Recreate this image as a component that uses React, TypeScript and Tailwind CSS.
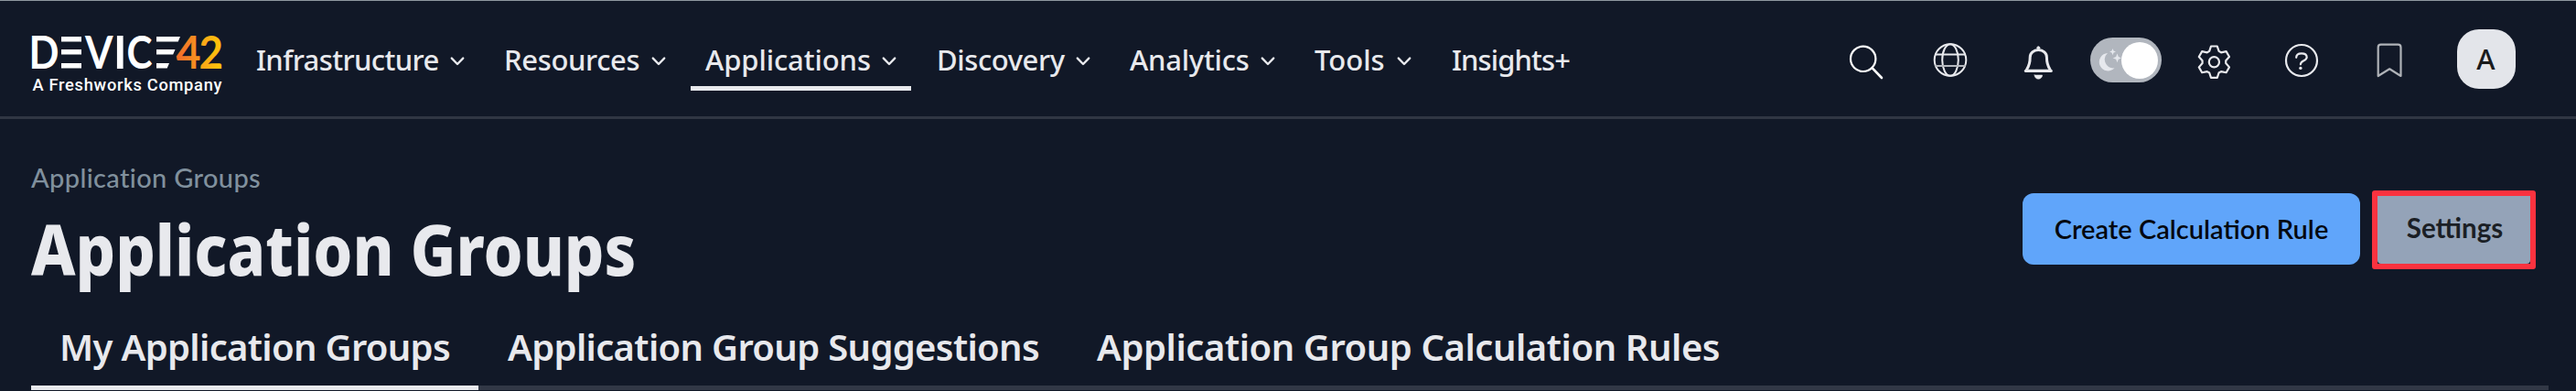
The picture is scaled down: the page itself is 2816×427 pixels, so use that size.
import type { ReactNode } from "react";

const navItems = [
  { label: "Infrastructure", box: "w-[260px] pl-4 tracking-[-0.6px]" },
  { label: "Resources", box: "w-[209px] pl-4 tracking-[-0.35px]" },
  { label: "Applications", box: "w-[241px] pl-4 tracking-[-0.1px]", active: true },
  { label: "Discovery", box: "w-[201px] pl-[17px] tracking-[-0.4px]" },
  { label: "Analytics", box: "w-[191px] pl-4 tracking-[-0.25px]" },
  { label: "Tools", box: "w-[138px] pl-4" },
  { label: "Insights+", box: "w-[160px] pl-[17px] tracking-[-0.9px]", plain: true },
];

const tabs = [
  { label: "My Application Groups", box: "w-[489px] pl-[31px] tracking-[-0.68px]", active: true },
  { label: "Application Group Suggestions", box: "w-[644px] pl-8 tracking-[-0.68px]" },
  { label: "Application Group Calculation Rules", box: "w-[740px] pl-8 tracking-[-0.45px]" },
];

function Logo() {
  return (
    <svg className="ml-[34px] h-[72px] w-[212px] shrink-0" viewBox="34 35 212 72">
      <defs>
        <linearGradient id="four" x1="0" x2="1">
          <stop offset="0" stopColor="#f26a2b" />
          <stop offset="1" stopColor="#f8981d" />
        </linearGradient>
        <linearGradient id="two" x1="0" x2="1">
          <stop offset="0" stopColor="#f9a01b" />
          <stop offset="1" stopColor="#ffcb08" />
        </linearGradient>
      </defs>
      <g fill="#fff" fontFamily="Lato, sans-serif" fontWeight="700" fontSize="49">
        <text x="31.5" y="75" textLength="33" lengthAdjust="spacingAndGlyphs">D</text>
        <path d="M67 40h22v5.5H67zM67 54h22v5.5H67zM67 69h22v5.5H67z" />
        <text x="93" y="75" textLength="30.5" lengthAdjust="spacingAndGlyphs">V</text>
        <text x="131.3" y="75" textAnchor="middle">I</text>
        <text x="138.5" y="75" textLength="28" lengthAdjust="spacingAndGlyphs">C</text>
        <path d="M171 40h26l-2.3 5.5H171zM171 54h20.5l-2.3 5.5H171zM171 69h14l-2.3 5.5H171z" />
        <text x="192.5" y="75" textLength="27" lengthAdjust="spacingAndGlyphs" fill="url(#four)">4</text>
        <text x="217.5" y="75" textLength="26.5" lengthAdjust="spacingAndGlyphs" fill="url(#two)">2</text>
      </g>
      <text x="35.5" y="98.7" fill="#fff" fontFamily="Roboto, sans-serif" fontWeight="500" fontSize="18.3" textLength="207">
        A Freshworks Company
      </text>
    </svg>
  );
}

function Chevron() {
  return (
    <svg className="mt-[2px] size-4" viewBox="0 0 16 16" fill="none" stroke="#e8e9ed" strokeWidth="2.4" strokeLinecap="round" strokeLinejoin="round">
      <path d="M1.8 4.6 8 11l6.2-6.4" />
    </svg>
  );
}

function Icon({ children, cell = "w-24", color = "stroke-[#e8e9ed]" }: { children: ReactNode; cell?: string; color?: string }) {
  return (
    <button className={`flex justify-center ${cell}`}>
      <svg className={`size-12 fill-none ${color}`} viewBox="0 0 48 48" strokeWidth="2.2" strokeLinecap="round" strokeLinejoin="round">
        {children}
      </svg>
    </button>
  );
}

// Six teeth, each given by its two base and two tip corners.
const gearPoints = [0, 60, 120, 180, 240, 300]
  .flatMap((turn) =>
    [
      [-5.2, -11.8],
      [-3.4, -17.2],
      [3.4, -17.2],
      [5.2, -11.8],
    ].map(([x, y]) => {
      const a = (turn * Math.PI) / 180;
      return `${(24.4 + x * Math.cos(a) - y * Math.sin(a)).toFixed(2)},${(27.7 + x * Math.sin(a) + y * Math.cos(a)).toFixed(2)}`;
    }),
  )
  .join(" ");

function ThemeToggle() {
  return (
    <div className="flex w-24 justify-center">
      <div className="mt-[3px] flex h-[49px] w-[78px] items-center justify-between rounded-full bg-[#b1b6be] pr-1 pl-[9px]">
        <svg className="h-7 w-[25px] shrink-0" viewBox="0 0 25 28" fill="#e6e8ed">
          <path d="M10 6A9.7 9.7 0 1 0 17.6 22.3A9.4 9.4 0 0 1 10 6z" />
          <path d="M15.5 1l1 2.6 2.5 1-2.5 1-1 2.6-1-2.6-2.5-1 2.5-1zM20.5 6.6l1.3 3.5 3.2 1.3-3.2 1.3-1.3 3.5-1.3-3.5-3.5-1.3 3.5-1.3z" />
        </svg>
        <span className="size-10 shrink-0 rounded-full bg-white" />
      </div>
    </div>
  );
}

function Header() {
  return (
    <header className="flex h-[130px] items-center border-t border-b-[3px] border-t-[#8f98a0] border-b-[#303643]">
      <div className="flex h-[126px] pt-[34px]">
        <Logo />
      </div>
      <nav className="ml-[18px] flex gap-[11px] text-[31px] leading-none font-medium text-[#e8e9ed]">
        {navItems.map((item) => (
          <a
            key={item.label}
            className={`flex h-[70px] items-center justify-between border-b-[5px] pt-[8px] pr-4 whitespace-nowrap ${item.box} ${item.active ? "border-[#e8e9ed]" : "border-transparent"}`}
          >
            {item.label}
            {!item.plain && <Chevron />}
          </a>
        ))}
      </nav>
      <div className="ml-auto flex items-center pr-[66px]">
        <Icon cell="w-[88px]" color="stroke-white">
          <circle cx="20.7" cy="24.3" r="13.7" />
          <path d="M30.5 34.2 41 45" strokeWidth="2.6" />
        </Icon>
        <Icon>
          <circle cx="24" cy="25.5" r="17.3" strokeWidth="2" />
          <ellipse cx="24" cy="25.5" rx="8.8" ry="17.3" strokeWidth="2" />
          <path d="M8 19.5h32" strokeWidth="2" />
          <path d="M8 32h32" strokeWidth="2" className="stroke-[#b4b7bd]" />
        </Icon>
        <Icon>
          <circle cx="24.3" cy="12.3" r="1.5" fill="#e8e9ed" strokeWidth="1" />
          <path d="M11.5 36C14.5 31.5 15.2 28 15.2 22.5C15.2 18 19 14.6 24.3 14.6S33.4 18 33.4 22.5C33.4 28 34.1 31.5 37.1 36" strokeWidth="3" />
          <path d="M10.5 37.4h27.6" strokeWidth="3.4" />
          <path d="M20 42h8.6a4.3 4.3 0 0 1-8.6 0z" fill="#e8e9ed" strokeWidth="0.5" />
        </Icon>
        <ThemeToggle />
        <Icon>
          <polygon points={gearPoints} />
          <circle cx="24.4" cy="27.7" r="5.6" />
        </Icon>
        <Icon>
          <circle cx="24" cy="26" r="17" />
          <path d="M18.2 22.8C18.2 19.7 20.5 18.3 24 18.3S29.7 20 29.7 22.4C29.7 26.6 22.9 25.8 22.9 30.3" />
          <circle cx="22.9" cy="34.4" r="1.7" className="fill-[#e8e9ed]" strokeWidth="0" />
        </Icon>
        <Icon color="stroke-[#b0b3b8]">
          <path d="M11.7 43V11.7a3 3 0 0 1 3-3h18.8a3 3 0 0 1 3 3V43L24.2 35.3z" />
        </Icon>
        <button className="ml-[26px] flex h-[65px] w-16 items-center justify-center rounded-[24px] bg-[#e3e5ea] pr-px text-[31px] leading-none font-medium text-[#1a1b1d]">
          A
        </button>
      </div>
    </header>
  );
}

export default function App() {
  return (
    <div className="h-[427px] w-[2816px] overflow-hidden bg-[#111827] font-['Noto_Sans',sans-serif]">
      <Header />
      <main className="pl-[34px]">
        <div className="flex h-[228px] justify-between">
          <div className="pt-[49px]">
            <div className="font-[Lato,sans-serif] text-[29px] leading-none font-medium tracking-[0.35px] text-[#80909d]">Application Groups</div>
            <h1 className="mt-[26px] w-[740px] origin-left scale-x-[0.902] text-[76px] leading-none font-extrabold whitespace-nowrap text-[#e8e9ed]">
              Application Groups
            </h1>
          </div>
          <div className="flex items-start gap-[13px] pt-[78px] pr-[44px] font-[Lato,sans-serif]">
            <button className="mt-[3px] flex h-[78px] w-[369px] items-center justify-center rounded-[12px] bg-[#60a5fa] pb-[2px] text-[29px] leading-none font-semibold text-[#05080f]">
              Create Calculation Rule
            </button>
            <div className="h-[86px] w-[179px] rounded-[3px] border-[6px] border-[#fb323f] bg-[#111827]">
              <button className="flex size-full items-center justify-center rounded-b-[4px] bg-[#94a3b8] pb-[4px] pl-[2px] text-[29.5px] leading-none font-bold text-[#1b1f25]">
                Settings
              </button>
            </div>
          </div>
        </div>
        <div className="mr-[30px] flex h-[68px] border-b-[5px] border-[#323846] text-[40px] leading-none font-semibold text-[#e8e9ed]">
          {tabs.map((tab) => (
            <a
              key={tab.label}
              className={`-mb-[5px] h-[68px] shrink-0 border-b-[5px] pt-px whitespace-nowrap ${tab.box} ${tab.active ? "border-[#e8e9ed]" : "border-transparent"}`}
            >
              {tab.label}
            </a>
          ))}
        </div>
      </main>
    </div>
  );
}
